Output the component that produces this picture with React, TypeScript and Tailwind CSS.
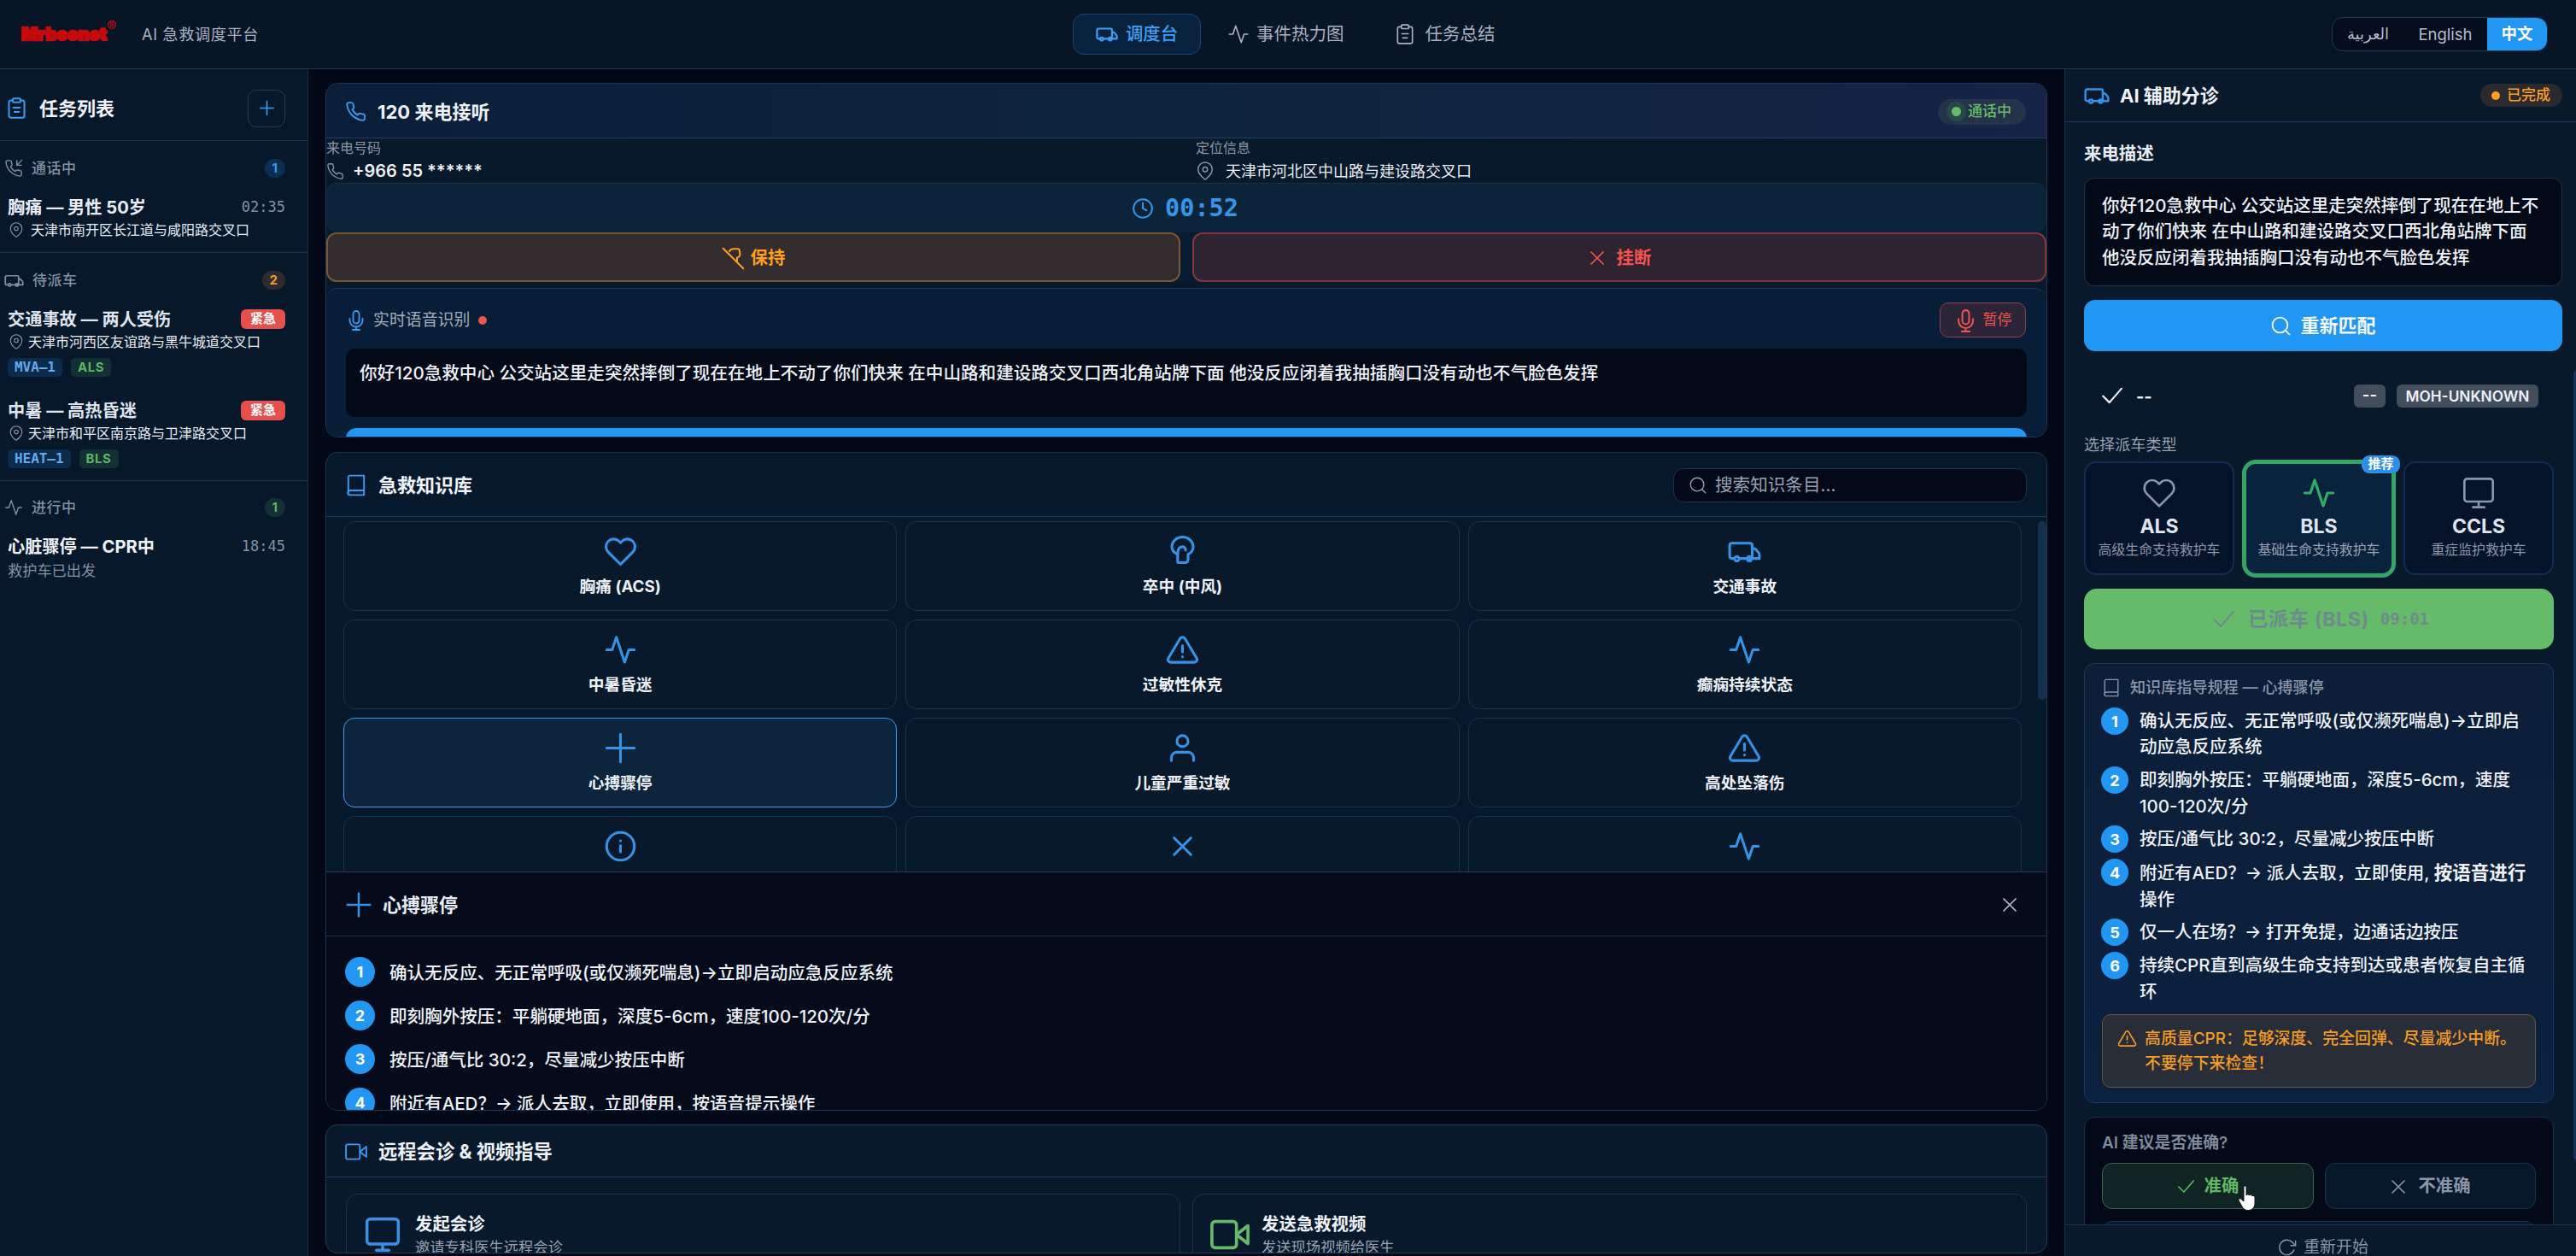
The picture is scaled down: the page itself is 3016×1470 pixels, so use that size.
import type { ReactNode } from "react";

type IconProps = { size: number; className?: string; sw?: number };

function Svg({ size, className = "", sw = 1.8, children }: IconProps & { children: ReactNode }) {
  return (
    <svg
      width={size}
      height={size}
      viewBox="0 0 24 24"
      fill="none"
      stroke="currentColor"
      strokeWidth={sw}
      strokeLinecap="round"
      strokeLinejoin="round"
      className={`shrink-0 ${className}`}
    >
      {children}
    </svg>
  );
}

const Ambulance = (p: IconProps) => (
  <Svg {...p}>
    <path d="M4.500 17H2.600A1.300 1.300 0 0 1 1.300 15.700V7.500A1.500 1.500 0 0 1 2.800 6h13.200A1.500 1.500 0 0 1 17.500 7.500V17H9" />
    <path d="M17.500 10h2.200l3 3.500V17H18" />
    <circle cx="6.500" cy="17.200" r="1.600" />
    <circle cx="15.500" cy="17.200" r="1.600" />
  </Svg>
);
const Activity = (p: IconProps) => (
  <Svg {...p}>
    <polyline points="22 12 18 12 15 21 9 3 6 12 2 12" />
  </Svg>
);
const Clipboard = (p: IconProps) => (
  <Svg {...p}>
    <path d="M16 4h2a2 2 0 0 1 2 2v14a2 2 0 0 1-2 2H6a2 2 0 0 1-2-2V6a2 2 0 0 1 2-2h2" />
    <rect x="8" y="2" width="8" height="4" rx="1" />
    <path d="M8.500 11.500h7M9.500 16h5" />
  </Svg>
);
const Plus = (p: IconProps) => (
  <Svg {...p}>
    <path d="M12 2v20M2 12h20" />
  </Svg>
);
const PHONE =
  "M22 16.920v3a2 2 0 0 1-2.180 2 19.790 19.790 0 0 1-8.630-3.070 19.500 19.500 0 0 1-6-6 19.790 19.790 0 0 1-3.070-8.670A2 2 0 0 1 4.110 2h3a2 2 0 0 1 2 1.720c.127.960.361 1.903.700 2.810a2 2 0 0 1-.450 2.110L8.090 9.910a16 16 0 0 0 6 6l1.270-1.270a2 2 0 0 1 2.110-.450c.907.339 1.850.573 2.810.700A2 2 0 0 1 22 16.920z";
const Phone = (p: IconProps) => (
  <Svg {...p}>
    <path d={PHONE} />
  </Svg>
);
const PhoneIn = (p: IconProps) => (
  <Svg {...p}>
    <path d={PHONE} />
    <path d="M16 2v6h6M22.500 1.500L16 8" />
  </Svg>
);
const PhoneHold = (p: IconProps) => (
  <Svg {...p}>
    <path d="M1.500 1.500l21 21" />
    <path d="M8 4.500C9 2.500 11 2 13 2h3.500a2 2 0 0 1 2 1.700l.6 4a2.500 2.500 0 0 1-1 2.300L16 11.500v3" />
  </Svg>
);
const Pin = (p: IconProps) => (
  <Svg {...p}>
    <path d="M21 10c0 7-9 13-9 13s-9-6-9-13a9 9 0 0 1 18 0z" />
    <circle cx="12" cy="10" r="3" />
  </Svg>
);
const Clock = (p: IconProps) => (
  <Svg {...p}>
    <circle cx="12" cy="12" r="10" />
    <path d="M12 6v6l4 2" />
  </Svg>
);
const Cross = (p: IconProps) => (
  <Svg {...p}>
    <path d="M18 6L6 18M6 6l12 12" />
  </Svg>
);
const Mic = (p: IconProps) => (
  <Svg {...p}>
    <path d="M12 1a3.500 3.500 0 0 0-3.500 3.500V12a3.500 3.500 0 0 0 7 0V4.500A3.500 3.500 0 0 0 12 1z" />
    <path d="M19.500 10v2a7.500 7.500 0 0 1-15 0v-2M12 19.500V23M8 23h8" />
  </Svg>
);
const Book = (p: IconProps) => (
  <Svg {...p}>
    <path d="M3.500 20.500v-17A2 2 0 0 1 5.500 1.500H20.500V22.500H5.500a2 2 0 0 1 0-5H20.500" />
  </Svg>
);
const Search = (p: IconProps) => (
  <Svg {...p}>
    <circle cx="11" cy="11" r="8.500" />
    <path d="M21.500 21.500l-4.300-4.300" />
  </Svg>
);
const Heart = (p: IconProps) => (
  <Svg {...p}>
    <path d="M20.840 4.610a5.500 5.500 0 0 0-7.780 0L12 5.670l-1.060-1.060a5.500 5.500 0 0 0-7.780 7.780l1.060 1.060L12 21.230l7.780-7.780 1.060-1.060a5.500 5.500 0 0 0 0-7.780z" />
  </Svg>
);
const Brain = (p: IconProps) => (
  <Svg {...p}>
    <path d="M8.500 19v-5C6 13 4.300 11 4.300 8.500a7.700 7 0 0 1 15.400 0c0 2.500-1.500 4.500-3.700 5.500v4a2 2 0 0 1-2 2H9.500a1 1 0 0 1-1-1z" />
    <path d="M8.500 14c0-3 .5-5.500 3.500-5.500a2.500 2.500 0 0 1 2.200 2.500" />
  </Svg>
);
const Warn = (p: IconProps) => (
  <Svg {...p}>
    <path d="M10.290 3.860L1.820 18a2 2 0 0 0 1.710 3h16.940a2 2 0 0 0 1.710-3L13.710 3.860a2 2 0 0 0-3.420 0z" />
    <path d="M12 9v4.500M12 17h.01" />
  </Svg>
);
const User = (p: IconProps) => (
  <Svg {...p}>
    <path d="M20 21v-2a4 4 0 0 0-4-4H8a4 4 0 0 0-4 4v2" />
    <circle cx="12" cy="7" r="4" />
  </Svg>
);
const Info = (p: IconProps) => (
  <Svg {...p}>
    <circle cx="12" cy="12" r="10" />
    <path d="M12 16v-4.500M12 8h.01" />
  </Svg>
);
const Monitor = (p: IconProps) => (
  <Svg {...p}>
    <rect x="2" y="2" width="20" height="16" rx="2" />
    <path d="M12 18v4M8 22h8" />
  </Svg>
);
const Video = (p: IconProps) => (
  <Svg {...p}>
    <rect x="1" y="4" width="15" height="16" rx="2" />
    <path d="M23 6.500L16 12l7 5.500z" />
  </Svg>
);
const Check = (p: IconProps) => (
  <Svg {...p}>
    <path d="M22 4.500L9 19.500l-7-7" />
  </Svg>
);
const Refresh = (p: IconProps) => (
  <Svg {...p}>
    <path d="M22.500 3.500v6h-6" />
    <path d="M20.500 15a9.500 9.500 0 1 1-2.200-9.800l4.200 4.300" />
  </Svg>
);

function Address({ text, gap }: { text: string; gap: string }) {
  return (
    <div className="flex h-6 items-center pl-[10px]">
      <Pin size={18} sw={1.5} className="text-[#8b95a8]" />
      <span className={`${gap} text-[16px] leading-6 text-[#e8edf5]`}>{text}</span>
    </div>
  );
}

function Group({ icon, label, count, badge }: { icon: ReactNode; label: string; count: string; badge: string }) {
  return (
    <div className="flex h-[28px] items-center pl-[5px] pr-[26px] text-[#8490a3]">
      {icon}
      <span className="ml-[10px] text-[17px] leading-7 font-medium tracking-[0.5px]">{label}</span>
      <span className={`ml-auto flex h-[22px] items-center rounded-full px-[9px] text-[15px] font-bold ${badge}`}>{count}</span>
    </div>
  );
}

function UrgentTask({ title, address, code, level }: { title: string; address: string; code: string; level: string }) {
  return (
    <div>
      <div className="flex h-[28px] items-center pl-[9px] pr-[26px]">
        <span className="text-[20.200px] leading-7 font-bold text-[#dfe5ee]">{title}</span>
        <span className="-mt-[2px] ml-auto flex h-[23px] w-[52px] items-center justify-center rounded-[6px] bg-[#e5504f] text-[15px] font-bold text-white">紧急</span>
      </div>
      <Address text={address} gap="ml-[5px]" />
      <div className="mt-[7px] flex h-[22px] gap-[10px] pl-[9px]">
        <span className="flex items-center rounded-[5px] bg-[#0b2b4c] px-[8px] font-['DejaVu_Sans_Mono','Noto_Sans_CJK_SC',monospace] text-[16px] font-bold tracking-[-0.05px] text-[#64a9ea]">{code}</span>
        <span className="flex items-center rounded-[5px] bg-[#122f34] px-[8px] text-[15px] font-bold tracking-[0.6px] text-[#5cb663]">{level}</span>
      </div>
    </div>
  );
}

function Sidebar() {
  return (
    <aside className="flex w-[361px] shrink-0 flex-col border-r border-[#152c4a] bg-[#06182a]">
      <div className="flex h-[84px] shrink-0 items-center border-b border-[#16345a] pt-[8px] pl-[6px] pr-[26px]">
        <Clipboard size={27} sw={1.8} className="text-[#3b9bf0]" />
        <h2 className="ml-[13px] text-[22px] leading-8 font-bold text-[#eef2f8]">任务列表</h2>
        <button className="ml-auto flex h-[44px] w-[44px] items-center justify-center rounded-[10px] border border-[#1b3a60] text-[#3b9bf0]">
          <Plus size={19} sw={2} />
        </button>
      </div>
      <section className="h-[131px] border-b border-[#142f50] pt-[18px]">
        <Group icon={<PhoneIn size={22} sw={1.5} />} label="通话中" count="1" badge="bg-[#0b2f52] text-[#3b9bf0]" />
        <div className="mt-[18px] flex h-[28px] items-center pl-[9px] pr-[26px]">
          <span className="text-[20.200px] leading-7 font-bold text-[#e8edf5]">胸痛 — 男性 50岁</span>
          <span className="ml-auto font-['DejaVu_Sans_Mono',monospace] text-[17px] text-[#8490a3]">02:35</span>
        </div>
        <Address text="天津市南开区长江道与咸阳路交叉口" gap="ml-[8px]" />
      </section>
      <section className="h-[267px] border-b border-[#142f50] pt-[18px]">
        <Group icon={<Ambulance size={23} sw={1.8} />} label="待派车" count="2" badge="bg-[#2d2b2f] text-[#f59a23]" />
        <div className="mt-[18px]">
          <UrgentTask title="交通事故 — 两人受伤" address="天津市河西区友谊路与黑牛城道交叉口" code="MVA–1" level="ALS" />
        </div>
        <div className="mt-[26px]">
          <UrgentTask title="中暑 — 高热昏迷" address="天津市和平区南京路与卫津路交叉口" code="HEAT–1" level="BLS" />
        </div>
      </section>
      <section className="pt-[17px]">
        <Group icon={<Activity size={22} sw={1.5} />} label="进行中" count="1" badge="bg-[#142f36] text-[#5cb663]" />
        <div className="mt-[18px] flex h-[28px] items-center pl-[9px] pr-[26px]">
          <span className="text-[20.200px] leading-7 font-bold text-[#eef2f8]">心脏骤停 — CPR中</span>
          <span className="ml-auto font-['DejaVu_Sans_Mono',monospace] text-[17px] text-[#8490a3]">18:45</span>
        </div>
        <p className="mt-[2px] pl-[9px] text-[17.200px] leading-6 text-[#8490a3]">救护车已出发</p>
      </section>
    </aside>
  );
}

function TopBar() {
  return (
    <header className="flex h-[81px] shrink-0 items-center border-b border-[#1a3552] bg-[#071525]">
      <div className="flex w-[1256px] items-center pl-[25px]">
        <span className="flex w-[141px] items-start text-[#c40a0a]">
          <span className="text-[20px] leading-[24px] font-black tracking-[0.2px] [-webkit-text-stroke:2.4px_#c40a0a]">Mrbeenet</span>
          <span className="-mt-[4px] text-[17px] leading-[15px]">®</span>
        </span>
        <span className="text-[18.200px] leading-7 tracking-[0.6px] text-[#a9b2c2]">AI 急救调度平台</span>
      </div>
      <nav className="flex items-center text-[20.500px] leading-8 text-[#a9b2c2]">
        <span className="mr-[31px] flex h-[48px] w-[150px] items-center justify-center gap-[9px] rounded-[13px] border border-[#1b4674] bg-[#09233f] text-[20.400px] font-medium text-[#3f9ff2]">
          <Ambulance size={26} sw={2} />
          调度台
        </span>
        <span className="mr-[58px] flex items-center gap-[8px]">
          <Activity size={26} sw={1.5} />
          事件热力图
        </span>
        <span className="flex items-center gap-[11px]">
          <Clipboard size={26} sw={1.5} />
          任务总结
        </span>
      </nav>
      <div className="mr-[33px] ml-auto flex h-[40px] w-[253px] items-center overflow-hidden rounded-[13px] border border-[#1d3654] bg-[#050d1d] text-[18.500px] text-[#b4bccb]">
        <span className="w-[83px] text-center font-['DejaVu_Sans','Noto_Sans',sans-serif] text-[18px] leading-8">العربية</span>
        <span className="w-[98px] text-center leading-8">English</span>
        <span className="flex h-full flex-1 items-center justify-center bg-[#2196f3] font-bold text-white">中文</span>
      </div>
    </header>
  );
}

const TRANSCRIPT =
  "你好120急救中心 公交站这里走突然摔倒了现在在地上不动了你们快来 在中山路和建设路交叉口西北角站牌下面 他没反应闭着我抽插胸口没有动也不气脸色发挥";

function CallPanel() {
  return (
    <section className="flex h-[415px] shrink-0 flex-col overflow-hidden rounded-[14px] border border-[#1a3555] bg-[#07192a]">
      <div className="flex h-[64px] shrink-0 items-center border-b border-[#1f3d62] bg-linear-to-r from-[#0a1e3a] via-[#0d253b] to-[#152346] pt-[2px] pr-[24px] pl-[22px]">
        <Phone size={25} className="text-[#3b9bf0]" />
        <h2 className="ml-[13px] text-[22px] leading-8 font-bold text-[#eef2f8]">120 来电接听</h2>
        <span className="ml-auto flex h-[30px] w-[103px] items-center rounded-full bg-[#25334a] pl-[10px] text-[17px] font-medium text-[#66bb6a]">
          <span className="flex h-[23px] w-[23px] items-center justify-center rounded-full bg-[#27494a]">
            <span className="h-[11px] w-[11px] rounded-full bg-[#66bb6a]" />
          </span>
          <span className="ml-[2px]">通话中</span>
        </span>
      </div>
      <div className="grid h-[52px] shrink-0 grid-cols-2 gap-x-[14px]">
        <div>
          <p className="text-[16px] leading-[22px] text-[#8b95a8]">来电号码</p>
          <div className="mt-[2px] flex h-[28px] items-center">
            <Phone size={21} sw={1.5} className="text-[#8b95a8]" />
            <span className="ml-[10px] text-[20px] font-semibold text-[#eef2f8]">+966 55 ******</span>
          </div>
        </div>
        <div className="pl-[4px]">
          <p className="text-[16px] leading-[22px] text-[#8b95a8]">定位信息</p>
          <div className="mt-[2px] flex h-[28px] items-center">
            <Pin size={22} sw={1.6} className="text-[#8b95a8]" />
            <span className="ml-[13px] text-[18px] text-[#e8edf5]">天津市河北区中山路与建设路交叉口</span>
          </div>
        </div>
      </div>
      <div className="flex h-[58px] shrink-0 items-center justify-center gap-[13px] rounded-[12px] border-t border-[#12304c] bg-[#0c243a] pr-[3px] text-[#3596ea]">
        <Clock size={26} sw={1.8} />
        <span className="font-['DejaVu_Sans_Mono',monospace] text-[28.500px] leading-[30px] font-bold">00:52</span>
      </div>
      <div className="grid h-[58px] shrink-0 grid-cols-2 gap-x-[14px] bg-[#071c30]">
        <button className="flex items-center justify-center gap-[7px] rounded-[12px] border-2 border-[#79562f] bg-[#332d2f] pt-[2px] text-[20.400px] font-bold text-[#ff9f1c]">
          <PhoneHold size={27} sw={1.8} />
          保持
        </button>
        <button className="flex items-center justify-center gap-[9px] rounded-[12px] border-2 border-[#82373f] bg-[#302331] pt-[2px] pr-[3px] text-[20.400px] font-bold text-[#f4524f]">
          <Cross size={28} sw={1.500} />
          挂断
        </button>
      </div>
      <div className="mt-[7px] flex flex-1 shrink-0 flex-col rounded-t-[14px] border-t border-[#1a3a60] bg-[#081d37] px-[23px] pt-[16px]">
        <div className="flex h-[41px] items-center">
          <Mic size={24} sw={1.800} className="text-[#3b9bf0]" />
          <span className="mt-[2px] ml-[8px] text-[18.900px] text-[#a4adbd]">实时语音识别</span>
          <span className="ml-[10px] h-[10px] w-[10px] rounded-full bg-[#ec5553]" />
          <button className="mr-[1px] ml-auto flex h-[41px] w-[101px] items-center justify-center gap-[7px] rounded-[10px] border border-[#8e3f47] bg-[#2c2437] pt-[1px] text-[17px] text-[#ef5350]">
            <Mic size={27} sw={1.800} />
            暂停
          </button>
        </div>
        <div className="mt-[13px] h-[80px] shrink-0 rounded-[10px] bg-[#030917] px-[16px] pt-[12px]">
          <p className="text-[20.590px] leading-[33px] font-medium whitespace-nowrap text-[#eef2f8]">{TRANSCRIPT}</p>
        </div>
        <div className="mt-[13px] h-[40px] shrink-0 rounded-[12px] bg-[#2196f3]" />
      </div>
    </section>
  );
}

const TOPICS: { label: string; Icon: (p: IconProps) => ReactNode; active?: boolean }[] = [
  { label: "胸痛 (ACS)", Icon: Heart },
  { label: "卒中 (中风)", Icon: Brain },
  { label: "交通事故", Icon: Ambulance },
  { label: "中暑昏迷", Icon: Activity },
  { label: "过敏性休克", Icon: Warn },
  { label: "癫痫持续状态", Icon: Activity },
  { label: "心搏骤停", Icon: Plus, active: true },
  { label: "儿童严重过敏", Icon: User },
  { label: "高处坠落伤", Icon: Warn },
  { label: "", Icon: Info },
  { label: "", Icon: Cross },
  { label: "", Icon: Activity },
];

const STEPS = [
  "确认无反应、无正常呼吸(或仅濒死喘息)→立即启动应急反应系统",
  "即刻胸外按压：平躺硬地面，深度5-6cm，速度100-120次/分",
  "按压/通气比 30:2，尽量减少按压中断",
  "附近有AED？→ 派人去取，立即使用，按语音提示操作",
];

function KnowledgePanel() {
  return (
    <section className="mt-[17px] flex h-[771px] shrink-0 flex-col overflow-hidden rounded-[14px] border border-[#1c3550] bg-[#06182b]">
      <div className="flex h-[75px] shrink-0 items-center border-b border-[#1a3a5e] pt-[2px] pr-[23px] pl-[22px]">
        <Book size={26} sw={1.800} className="text-[#3b9bf0]" />
        <h2 className="ml-[13px] text-[22px] leading-8 font-bold text-[#eef2f8]">急救知识库</h2>
        <div className="ml-auto flex h-[40px] w-[414px] items-center rounded-[12px] border border-[#1c3452] bg-[#030918] pl-[17px] text-[#98a1b2]">
          <Search size={22} sw={1.500} />
          <span className="ml-[9px] text-[20.600px] leading-8">搜索知识条目...</span>
        </div>
      </div>
      <div className="flex h-[415px] shrink-0 overflow-hidden pt-[5px] pl-[20px]">
        <div className="grid w-[1965px] shrink-0 auto-rows-[105px] grid-cols-3 gap-[10px]">
          {TOPICS.map(({ label, Icon, active }, i) => (
            <div
              key={i}
              className={`flex flex-col items-center rounded-[13px] border pt-[15px] ${
                active ? "border-[#3a9af0] bg-[#0c253d]" : "border-[#173150] bg-[#07192a]"
              }`}
            >
              <Icon size={39} sw={1.900} className="text-[#3792e6]" />
              <span className="mt-[8px] text-[18.700px] leading-7 font-bold text-[#eef2f8]">{label}</span>
            </div>
          ))}
        </div>
        <div className="ml-[19px] h-[209px] w-[10px] rounded-full bg-[#15304f]" />
      </div>
      <div className="flex flex-1 flex-col border-t border-[#1c3a58] bg-[#050b1a]">
        <div className="flex h-[75px] shrink-0 items-center border-b border-[#1f3045] pt-[1px] pr-[29px] pl-[22px]">
          <Plus size={32} sw={1.900} className="text-[#3792e6]" />
          <h3 className="ml-[12px] text-[22px] leading-8 font-bold text-[#e8edf5]">心搏骤停</h3>
          <Cross size={28} sw={1.500} className="ml-auto text-[#b4bccb]" />
        </div>
        <ol className="flex flex-col gap-[16px] px-[22px] pt-[24px]">
          {STEPS.map((s, i) => (
            <li key={s} className="flex h-[35px] items-center">
              <span className="flex h-[35px] w-[35px] items-center justify-center rounded-full bg-[#2196f3] text-[18px] font-bold text-white">{i + 1}</span>
              <span className="mt-[2px] ml-[17px] text-[20.560px] leading-8 font-medium text-[#eef2f8]">{s}</span>
            </li>
          ))}
        </ol>
      </div>
    </section>
  );
}

function RemotePanel() {
  const cards = [
    { icon: <Monitor size={44} sw={1.900} className="text-[#3792e6]" />, title: "发起会诊", sub: "邀请专科医生远程会诊", gap: "ml-[16px]" },
    { icon: <Video size={46} sw={1.900} className="text-[#66bb6a]" />, title: "发送急救视频", sub: "发送现场视频给医生", gap: "ml-[14px]" },
  ];
  return (
    <section className="mt-[16px] flex h-[151px] shrink-0 flex-col overflow-hidden rounded-[14px] border border-[#1c3a58] bg-[#07192b]">
      <div className="flex h-[61px] shrink-0 items-center border-b border-[#1a3a5e] pt-[2px] pl-[22px]">
        <Video size={26} sw={1.700} className="text-[#3b9bf0]" />
        <h2 className="ml-[13px] text-[22.300px] leading-8 font-bold text-[#eef2f8]">远程会诊 & 视频指导</h2>
      </div>
      <div className="grid grid-cols-2 gap-[14px] px-[23px] pt-[19px]">
        {cards.map((c) => (
          <div key={c.title} className="flex h-[96px] items-center rounded-[14px] border border-[#173252] pl-[20px]">
            {c.icon}
            <div className={c.gap}>
              <p className="text-[20.400px] leading-[28px] font-bold text-[#eef2f8]">{c.title}</p>
              <p className="text-[17.300px] leading-[25px] text-[#98a1b2]">{c.sub}</p>
            </div>
          </div>
        ))}
      </div>
    </section>
  );
}

const GUIDE: ReactNode[] = [
  <>确认无反应、无正常呼吸(或仅濒死喘息)→立即启<br />动应急反应系统</>,
  <>即刻胸外按压：平躺硬地面，深度5-6cm，速度<br />100-120次/分</>,
  <>按压/通气比 30:2，尽量减少按压中断</>,
  <>附近有AED？→ 派人去取，立即使用, <b className="text-[21.500px]">按语音进行</b><br />操作</>,
  <>仅一人在场？→ 打开免提，边通话边按压</>,
  <>持续CPR直到高级生命支持到达或患者恢复自主循<br />环</>,
];

function VehicleCard({ icon, name, desc }: { icon: ReactNode; name: string; desc: string }) {
  return (
    <div className="flex h-[133px] w-[176px] flex-col items-center rounded-[14px] border-2 border-[#122c55] bg-[#04132a] pt-[15px] text-[#8b95a8]">
      {icon}
      <span className="mt-[4px] text-[23px] leading-[30px] font-bold text-[#dfe4ef]">{name}</span>
      <span className="mt-[1px] text-[15.900px] leading-6 whitespace-nowrap">{desc}</span>
    </div>
  );
}

function TriagePanel() {
  return (
    <aside className="relative flex w-[599px] shrink-0 flex-col border-l border-[#1c3350] bg-[#07192a]">
      <div className="flex h-[62px] shrink-0 items-center border-b border-[#1a3a63] pr-[16px] pl-[22px]">
        <Ambulance size={30} sw={1.900} className="text-[#3592e8]" />
        <h2 className="ml-[12px] text-[22px] leading-8 font-bold text-[#eef2f8]">AI 辅助分诊</h2>
        <span className="ml-auto flex h-[27px] w-[96px] items-center rounded-full bg-[#2b2a2e] pl-[13px] text-[17px] font-medium text-[#ff9f1c]">
          <span className="mr-[8px] h-[10px] w-[10px] rounded-full bg-[#ff9f1c]" />
          已完成
        </span>
      </div>
      <div className="flex h-[1290px] shrink-0 flex-col overflow-hidden pl-[22px]">
        <h3 className="mt-[21px] h-[32px] shrink-0 text-[20.400px] leading-8 font-bold text-[#e8edf5]">来电描述</h3>
        <div className="mt-[12px] h-[127px] w-[560px] shrink-0 rounded-[12px] border border-[#1d3049] bg-[#030917] pt-[17px] pl-[20px]">
          <p className="text-[20.500px] leading-[30.400px] font-medium whitespace-nowrap text-[#eef2f8]">
            你好120急救中心 公交站这里走突然摔倒了现在在地上不<br />动了你们快来 在中山路和建设路交叉口西北角站牌下面<br />他没反应闭着我抽插胸口没有动也不气脸色发挥
          </p>
        </div>
        <button className="mt-[16px] flex h-[60px] w-[560px] shrink-0 items-center justify-center gap-[10px] rounded-[13px] bg-[#2196f3] pt-[1px] text-[22px] font-bold text-[#f2f8ff]">
          <Search size={25} sw={1.800} />
          重新匹配
        </button>
        <div className="mt-[36px] flex h-[32px] shrink-0 items-center pr-[44px] pl-[20px] text-[#eef2f8]">
          <Check size={26} sw={2} />
          <span className="ml-[15px] pt-[2px] text-[20px] font-bold">--</span>
          <span className="ml-auto flex h-[27px] items-center rounded-[6px] bg-[#444d5c] px-[10px] text-[18.500px] font-semibold">--</span>
          <span className="ml-[13px] flex h-[27px] w-[166px] items-center justify-center rounded-[6px] bg-[#444d5c] pt-[1px] text-[17.300px] font-semibold">MOH-UNKNOWN</span>
        </div>
        <p className="mt-[25px] h-[32px] shrink-0 text-[18.100px] leading-8 text-[#98a1b2]">选择派车类型</p>
        <div className="mt-[2px] flex h-[137px] w-[550px] shrink-0 items-center justify-between">
          <VehicleCard icon={<Heart size={40} sw={1.600} />} name="ALS" desc="高级生命支持救护车" />
          <div className="relative flex h-[138px] w-[180px] flex-col items-center rounded-[16px] border-[5px] border-[#33a565] bg-[#0a233c] pt-[14px] text-[#98a1b2]">
            <Activity size={40} sw={1.900} className="text-[#2fae66]" />
            <span className="mt-[4px] text-[23px] leading-[30px] font-bold text-[#dfe4ef]">BLS</span>
            <span className="mt-[1px] text-[15.900px] leading-6 whitespace-nowrap">基础生命支持救护车</span>
            <span className="absolute -top-[10px] -right-[10px] flex h-[21px] w-[45px] items-center justify-center rounded-[9px] bg-[#2d8fe8] text-[15px] font-bold text-white">推荐</span>
          </div>
          <VehicleCard icon={<Monitor size={40} sw={1.600} />} name="CCLS" desc="重症监护救护车" />
        </div>
        <div className="mt-[14px] flex h-[71px] w-[550px] shrink-0 items-center justify-center rounded-[15px] bg-[#66bb6a] pl-[4px] text-[#6c8b8d]">
          <Check size={27} sw={1.900} />
          <span className="ml-[15px] text-[23.400px] font-bold tracking-[0.5px]">已派车 (BLS)</span>
          <span className="ml-[13px] font-['DejaVu_Sans_Mono',monospace] text-[19px] font-bold">09:01</span>
        </div>
        <div className="mt-[16px] h-[515px] w-[550px] shrink-0 rounded-[12px] border border-[#163b64] bg-linear-to-b from-[#0c1e38] to-[#0b2140] px-[20px] pt-[12px]">
          <div className="flex h-[32px] items-center text-[#8b95a8]">
            <Book size={22} sw={1.500} />
            <span className="ml-[11px] text-[18.100px] font-medium">知识库指导规程 — 心搏骤停</span>
          </div>
          <ol className="mt-[8px] flex flex-col gap-[8.400px]">
            {GUIDE.map((g, i) => (
              <li key={i} className="flex items-start">
                <span className="-mt-[1px] -mb-[1px] -ml-[1px] flex h-[32px] w-[32px] shrink-0 items-center justify-center rounded-full bg-[#2196f3] text-[18px] font-bold text-white">{i + 1}</span>
                <p className="ml-[13px] text-[20.500px] leading-[30.400px] font-medium whitespace-nowrap text-[#eef2f8]">{g}</p>
              </li>
            ))}
          </ol>
          <div className="mt-[11px] flex h-[86px] rounded-[10px] border border-[#71542f] bg-[#292d38] pt-[14px] pl-[17px] text-[#f49c22]">
            <Warn size={23} sw={1.700} className="mt-[2px]" />
            <p className="ml-[9px] text-[18.900px] leading-[28.700px] font-medium whitespace-nowrap">
              高质量CPR：足够深度、完全回弹、尽量减少中断。
              <br />
              不要停下来检查！
            </p>
          </div>
        </div>
        <div className="mt-[16px] h-[200px] w-[550px] shrink-0 rounded-[12px] border border-[#15304f] bg-[#030917] px-[20px] pt-[14px]">
          <p className="h-[32px] text-[18.900px] leading-8 font-semibold text-[#7e899c]">AI 建议是否准确?</p>
          <div className="mt-[7px] flex h-[54px] justify-between text-[20.400px] font-bold">
            <button className="flex w-[248px] items-center justify-center gap-[11px] rounded-[12px] border border-[#2f6a44] bg-[#102423] pt-[1px] text-[#5fb866]">
              <Check size={21} sw={1.800} />
              准确
            </button>
            <button className="flex w-[247px] items-center justify-center gap-[9px] rounded-[12px] border border-[#1a3350] bg-[#07182a] pt-[1px] pr-[4px] text-[#8b95a8]">
              <Cross size={28} sw={1.500} />
              不准确
            </button>
          </div>
          <div className="mt-[14px] h-[60px] rounded-[12px] border border-[#173252] bg-[#07182a]" />
        </div>
      </div>
      <div className="flex flex-1 items-center justify-center gap-[8px] border-t border-[#183350] pt-[12px] pl-[6px] text-[18.900px] text-[#8b95a8]">
        <Refresh size={22} sw={1.600} />
        重新开始
      </div>
      <div className="absolute top-[353px] right-0 h-[923px] w-[3px] rounded-l-full bg-[#16325a]" />
      <svg className="absolute top-[1306px] left-[202px]" width="22" height="31" viewBox="0 0 22 31" fill="#fff" stroke="#111" strokeWidth="1">
        <path d="M7 2.500C7 .5 10 .5 10 2.500V12c.5-1.500 3-1.500 3.500 0 .8-1.200 3-.8 3.300.8 1.200-.9 3-.2 3.200 1.500V21c0 5-3 8.500-8 8.500-4.500 0-6-2.500-7.500-5.500L1 18c-.8-1.800 1-3 2.500-2L7 19z" />
      </svg>
    </aside>
  );
}

export default function App() {
  return (
    <div className="flex h-[1470px] w-[3016px] flex-col overflow-hidden bg-[#030817] font-['Inter','Noto_Sans_CJK_SC',sans-serif]">
      <TopBar />
      <div className="flex min-h-0 flex-1">
        <Sidebar />
        <main className="flex min-w-0 flex-1 flex-col px-[20px] pt-[16px]">
          <CallPanel />
          <KnowledgePanel />
          <RemotePanel />
        </main>
        <TriagePanel />
      </div>
    </div>
  );
}
